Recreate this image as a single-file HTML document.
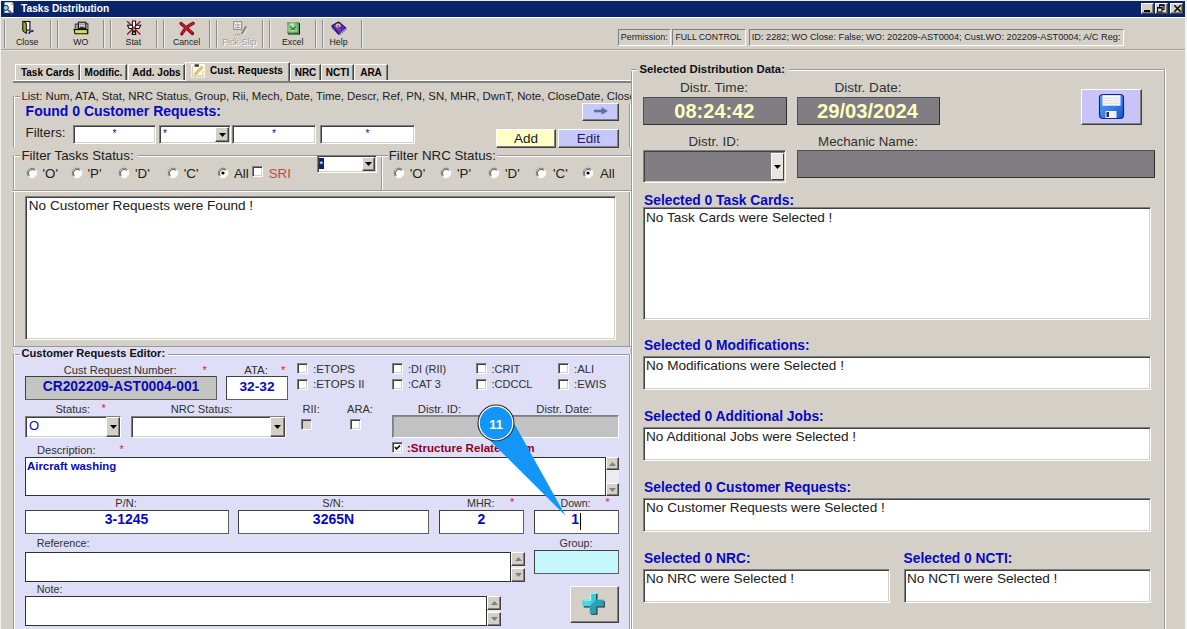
<!DOCTYPE html><html><head><meta charset="utf-8"><style>
html,body{margin:0;padding:0}
body{width:1187px;height:629px;overflow:hidden;position:relative;background:#D4D0C8;font-family:"Liberation Sans",sans-serif}
.a{position:absolute}
.t{position:absolute;white-space:nowrap;font-family:"Liberation Sans",sans-serif}
</style></head><body>
<div class="a" style="left:0px;top:0px;width:1187px;height:1px;background:#F0F0F0"></div>
<div class="a" style="left:0px;top:0px;width:1px;height:629px;background:#F0F0F0"></div>
<div class="a" style="left:1185px;top:0px;width:2px;height:629px;background:#EEF2FA"></div>
<div class="a" style="left:1px;top:1px;width:1184px;height:16px;background:#0A246A"></div>
<svg class="a" style="left:0px;top:0px" width="18" height="17"><path d="M4.5 2.3H12.5L14 3.8V13.2H4.5Z" fill="#F8F8F0"/><path d="M14 3V13.3H4.5" stroke="#101010" stroke-width="1" fill="none"/><rect x="11.5" y="3.5" width="2" height="1.5" fill="#A08080"/><path d="M8.3 10.2L12.2 14.2" stroke="#3050D0" stroke-width="1.8"/><circle cx="5.8" cy="7.9" r="2.6" fill="#80D8E8" stroke="#101010" stroke-width="0.9"/></svg>
<div class="t" style="left:21.00px;top:2px;font-size:10.2px;line-height:14px;font-weight:bold;color:#fff;">Tasks Distribution</div>
<div class="a" style="left:1141px;top:3px;width:13px;height:11px;background:#D4D0C8;border-style:solid;border-width:1px;border-color:#fff #404040 #404040 #fff;box-shadow:inset -1px -1px 0 #808080;box-sizing:border-box"></div>
<div class="a" style="left:1155px;top:3px;width:13px;height:11px;background:#D4D0C8;border-style:solid;border-width:1px;border-color:#fff #404040 #404040 #fff;box-shadow:inset -1px -1px 0 #808080;box-sizing:border-box"></div>
<div class="a" style="left:1170px;top:3px;width:13px;height:11px;background:#D4D0C8;border-style:solid;border-width:1px;border-color:#fff #404040 #404040 #fff;box-shadow:inset -1px -1px 0 #808080;box-sizing:border-box"></div>
<div class="a" style="left:1144px;top:10px;width:6px;height:2px;background:#000"></div>
<svg class="a" style="left:1157px;top:4px" width="8" height="9"><rect x="2.5" y="1" width="4.5" height="4.5" fill="none" stroke="#000"/><rect x="2" y="0.5" width="5.5" height="1.6" fill="#000"/><rect x="0.5" y="3.5" width="4.5" height="4.5" fill="#D4D0C8" stroke="#000"/><rect x="0" y="3" width="5.5" height="1.6" fill="#000"/></svg>
<svg class="a" style="left:1173px;top:4px" width="9" height="9"><path d="M1.3 1.3L7.7 7.7M7.7 1.3L1.3 7.7" stroke="#000" stroke-width="1.5"/></svg>
<div class="a" style="left:1px;top:17px;width:1184px;height:1px;background:#fff"></div>
<div class="a" style="left:1px;top:49px;width:1184px;height:1px;background:#A4A29C"></div>
<div class="a" style="left:1px;top:50px;width:1184px;height:1px;background:#E4E2DC"></div>
<div class="a" style="left:4px;top:20px;width:1px;height:28px;background:#8C8C8C"></div>
<div class="a" style="left:5px;top:20px;width:1px;height:28px;background:#EAEAEA"></div>
<div class="a" style="left:50px;top:20px;width:1px;height:28px;background:#8C8C8C"></div>
<div class="a" style="left:51px;top:20px;width:1px;height:28px;background:#EAEAEA"></div>
<div class="a" style="left:57px;top:20px;width:1px;height:28px;background:#8C8C8C"></div>
<div class="a" style="left:58px;top:20px;width:1px;height:28px;background:#EAEAEA"></div>
<div class="a" style="left:103px;top:20px;width:1px;height:28px;background:#8C8C8C"></div>
<div class="a" style="left:104px;top:20px;width:1px;height:28px;background:#EAEAEA"></div>
<div class="a" style="left:110px;top:20px;width:1px;height:28px;background:#8C8C8C"></div>
<div class="a" style="left:111px;top:20px;width:1px;height:28px;background:#EAEAEA"></div>
<div class="a" style="left:156px;top:20px;width:1px;height:28px;background:#8C8C8C"></div>
<div class="a" style="left:157px;top:20px;width:1px;height:28px;background:#EAEAEA"></div>
<div class="a" style="left:163px;top:20px;width:1px;height:28px;background:#8C8C8C"></div>
<div class="a" style="left:164px;top:20px;width:1px;height:28px;background:#EAEAEA"></div>
<div class="a" style="left:209px;top:20px;width:1px;height:28px;background:#8C8C8C"></div>
<div class="a" style="left:210px;top:20px;width:1px;height:28px;background:#EAEAEA"></div>
<div class="a" style="left:216px;top:20px;width:1px;height:28px;background:#8C8C8C"></div>
<div class="a" style="left:217px;top:20px;width:1px;height:28px;background:#EAEAEA"></div>
<div class="a" style="left:262px;top:20px;width:1px;height:28px;background:#8C8C8C"></div>
<div class="a" style="left:263px;top:20px;width:1px;height:28px;background:#EAEAEA"></div>
<div class="a" style="left:269px;top:20px;width:1px;height:28px;background:#8C8C8C"></div>
<div class="a" style="left:270px;top:20px;width:1px;height:28px;background:#EAEAEA"></div>
<div class="a" style="left:315px;top:20px;width:1px;height:28px;background:#8C8C8C"></div>
<div class="a" style="left:316px;top:20px;width:1px;height:28px;background:#EAEAEA"></div>
<div class="a" style="left:322px;top:20px;width:1px;height:28px;background:#8C8C8C"></div>
<div class="a" style="left:323px;top:20px;width:1px;height:28px;background:#EAEAEA"></div>
<div class="a" style="left:361px;top:20px;width:1px;height:28px;background:#8C8C8C"></div>
<div class="a" style="left:362px;top:20px;width:1px;height:28px;background:#EAEAEA"></div>
<div class="t" style="left:-2.80px;width:60px;text-align:center;top:36px;font-size:8.75px;line-height:12px;font-weight:normal;color:#202020;">Close</div>
<div class="t" style="left:50.70px;width:60px;text-align:center;top:36px;font-size:8.75px;line-height:12px;font-weight:normal;color:#202020;">WO</div>
<div class="t" style="left:103.40px;width:60px;text-align:center;top:36px;font-size:8.75px;line-height:12px;font-weight:normal;color:#202020;">Stat</div>
<div class="t" style="left:156.50px;width:60px;text-align:center;top:36px;font-size:8.75px;line-height:12px;font-weight:normal;color:#202020;">Cancel</div>
<div class="t" style="left:210.20px;width:60px;text-align:center;top:37px;font-size:8.75px;line-height:12px;font-weight:normal;color:#fff;">Pick-Slip</div>
<div class="t" style="left:209.20px;width:60px;text-align:center;top:36px;font-size:8.75px;line-height:12px;font-weight:normal;color:#A0A0A0;">Pick-Slip</div>
<div class="t" style="left:262.70px;width:60px;text-align:center;top:36px;font-size:8.75px;line-height:12px;font-weight:normal;color:#202020;">Excel</div>
<div class="t" style="left:308.50px;width:60px;text-align:center;top:36px;font-size:8.75px;line-height:12px;font-weight:normal;color:#202020;">Help</div>
<svg class="a" style="left:18px;top:18px" width="22" height="20"><rect x="5.3" y="3.5" width="6.6" height="8.6" fill="#F4F4E8" stroke="#101010" stroke-width="1.1"/><path d="M4.8 3.2L8.4 5.2V15.6L4.8 13Z" fill="#90AC18" stroke="#101010" stroke-width="1"/><path d="M11 15.8Q11.5 13 14.8 13" stroke="#202080" stroke-width="1.6" fill="none"/><path d="M13.8 11.4L16.2 13L13.8 14.6Z" fill="#202080"/></svg>
<svg class="a" style="left:70px;top:18px" width="22" height="20"><rect x="5.2" y="6" width="3.5" height="6.5" fill="#A8A8A0" stroke="#202020" stroke-width="0.8"/><rect x="15.7" y="5.8" width="2.2" height="9.5" fill="#E8E8E0" stroke="#101010" stroke-width="0.9"/><rect x="8.4" y="4.2" width="7.4" height="6.4" fill="#F8F8F0" stroke="#101010" stroke-width="1.1"/><rect x="9.3" y="5.2" width="5.6" height="2.2" fill="#A0A098"/><rect x="9.6" y="8.6" width="5" height="1.2" fill="#101010"/><path d="M4.2 11.6H17.2L17.6 15.8H5Z" fill="#D0E040" stroke="#101010" stroke-width="1.1"/><path d="M5.5 13H16.5" stroke="#E8F070" stroke-width="0.8"/></svg>
<svg class="a" style="left:123px;top:18px" width="22" height="20"><path d="M4.2 3.3L17.4 16.5M17.4 3.3L4.2 16.5" stroke="#A01830" stroke-width="1.5"/><path d="M4.5 7.2H17.7L16 10.5H6Z" fill="#F4F4F4" stroke="#101010" stroke-width="1.1"/><rect x="9.4" y="3" width="3.2" height="13.5" fill="#F8F8F8" stroke="#101010" stroke-width="1"/><path d="M9 16.5L11 12.5L13 16.5" stroke="#101010" stroke-width="1.2" fill="none"/><circle cx="11" cy="9.8" r="1.5" fill="#D02040"/></svg>
<svg class="a" style="left:176px;top:18px" width="22" height="20"><path d="M5 5.5Q10 9.5 16.5 15.5" stroke="#600810" stroke-width="3.2" fill="none" stroke-linecap="round"/><path d="M17.2 5.3Q10 8.5 5.8 15.8" stroke="#600810" stroke-width="3.2" fill="none" stroke-linecap="round"/><path d="M5.3 5.6Q10 9.3 16 15" stroke="#E01020" stroke-width="1.8" fill="none" stroke-linecap="round"/><path d="M16.8 5.5Q10 8.6 6.2 15.2" stroke="#E01828" stroke-width="1.8" fill="none" stroke-linecap="round"/></svg>
<svg class="a" style="left:228px;top:18px" width="22" height="20"><rect x="5.7" y="3.7" width="8" height="7.8" fill="#F4F4F4" stroke="#8C8C8C" stroke-width="1.1"/><path d="M7 7H12.5M7 9.5H12.5" stroke="#8C8C8C" stroke-width="0.9"/><path d="M9.8 5V11" stroke="#A8A8A8" stroke-width="0.8"/><path d="M18.5 8.5L14 16" stroke="#888" stroke-width="2.6"/><path d="M19.5 9.5L15 17" stroke="#fff" stroke-width="0.9"/><path d="M7 16.6H13" stroke="#909090" stroke-dasharray="1.2 0.8"/></svg>
<svg class="a" style="left:282px;top:18px" width="22" height="20"><defs><radialGradient id="xg" cx="0.45" cy="0.45" r="0.6"><stop offset="0" stop-color="#C8F0C0"/><stop offset="1" stop-color="#4E9A4E"/></radialGradient></defs><rect x="6" y="5" width="12" height="11.5" fill="#081808"/><rect x="5.2" y="4.1" width="11.8" height="11.5" fill="url(#xg)"/><path d="M8 8.5L14 13M14 8.5L8 13" stroke="#2E7A2E" stroke-width="1.5"/><path d="M6.5 12.8H15.5" stroke="#E0FFE0" stroke-width="0.9"/><path d="M8 6.2H12" stroke="#E8FFE8" stroke-width="0.8"/></svg>
<svg class="a" style="left:328px;top:16px" width="22" height="20"><path d="M4 9.5L10.8 5.8L18 12L10.6 18.2Z" fill="#5A28C0" stroke="#140060" stroke-width="1"/><path d="M10.6 18.2L18 12L18.2 13.6L11 19Z" fill="#F0F0F0" stroke="#302060" stroke-width="0.6"/><path d="M4 9.5L4.3 11.8L10.6 18.2" fill="none" stroke="#140060" stroke-width="1"/><path d="M6 9.5L12.5 15" stroke="#9070E0" stroke-width="0.8"/><ellipse cx="10.2" cy="9.6" rx="2.4" ry="2" fill="#E8D078"/><circle cx="10.2" cy="9.8" r="0.9" fill="#705018"/></svg>
<div class="a" style="left:618px;top:29px;width:53px;height:17px;border:1px solid;border-color:#808080 #fff #fff #808080;box-sizing:border-box"></div>
<div class="t" style="left:620.75px;top:31px;font-size:9px;line-height:12px;font-weight:normal;color:#202020;">Permission:</div>
<div class="a" style="left:672px;top:29px;width:74px;height:17px;border:1px solid;border-color:#808080 #fff #fff #808080;box-sizing:border-box"></div>
<div class="t" style="left:675.50px;top:31px;font-size:8.7px;line-height:12px;font-weight:normal;color:#202020;">FULL CONTROL</div>
<div class="a" style="left:749px;top:29px;width:375px;height:17px;border:1px solid;border-color:#808080 #fff #fff #808080;box-sizing:border-box"></div>
<div class="t" style="left:751.75px;top:31px;font-size:9.2px;line-height:12px;font-weight:normal;color:#202020;width:368px;overflow:hidden">ID: 2282; WO Close: False; WO: 202209-AST0004; Cust.WO: 202209-AST0004; A/C Reg:</div>
<div class="a" style="left:13px;top:80px;width:618px;height:1px;background:#fff"></div>
<div class="a" style="left:13px;top:81px;width:618px;height:2px;background:#808080"></div>
<div class="a" style="left:15px;top:64px;width:65px;height:16px;background:#D4D0C8;border-left:1px solid #fff;border-top:1px solid #fff;border-right:1px solid #404040;box-sizing:border-box;box-shadow:inset -1px 0 0 #808080"></div>
<div class="t" style="left:-2.50px;width:100px;text-align:center;top:66px;font-size:10px;line-height:13px;font-weight:bold;color:#000;">Task Cards</div>
<div class="a" style="left:80px;top:64px;width:47px;height:16px;background:#D4D0C8;border-left:1px solid #fff;border-top:1px solid #fff;border-right:1px solid #404040;box-sizing:border-box;box-shadow:inset -1px 0 0 #808080"></div>
<div class="t" style="left:53.50px;width:100px;text-align:center;top:66px;font-size:10px;line-height:13px;font-weight:bold;color:#000;">Modific.</div>
<div class="a" style="left:128px;top:64px;width:57px;height:16px;background:#D4D0C8;border-left:1px solid #fff;border-top:1px solid #fff;border-right:1px solid #404040;box-sizing:border-box;box-shadow:inset -1px 0 0 #808080"></div>
<div class="t" style="left:106.50px;width:100px;text-align:center;top:66px;font-size:10px;line-height:13px;font-weight:bold;color:#000;">Add. Jobs</div>
<div class="a" style="left:290px;top:64px;width:31px;height:16px;background:#D4D0C8;border-left:1px solid #fff;border-top:1px solid #fff;border-right:1px solid #404040;box-sizing:border-box;box-shadow:inset -1px 0 0 #808080"></div>
<div class="t" style="left:255.50px;width:100px;text-align:center;top:66px;font-size:10px;line-height:13px;font-weight:bold;color:#000;">NRC</div>
<div class="a" style="left:321px;top:64px;width:33px;height:16px;background:#D4D0C8;border-left:1px solid #fff;border-top:1px solid #fff;border-right:1px solid #404040;box-sizing:border-box;box-shadow:inset -1px 0 0 #808080"></div>
<div class="t" style="left:287.50px;width:100px;text-align:center;top:66px;font-size:10px;line-height:13px;font-weight:bold;color:#000;">NCTI</div>
<div class="a" style="left:354px;top:64px;width:34px;height:16px;background:#D4D0C8;border-left:1px solid #fff;border-top:1px solid #fff;border-right:1px solid #404040;box-sizing:border-box;box-shadow:inset -1px 0 0 #808080"></div>
<div class="t" style="left:321.00px;width:100px;text-align:center;top:66px;font-size:10px;line-height:13px;font-weight:bold;color:#000;">ARA</div>
<div class="a" style="left:185px;top:62px;width:105px;height:19px;background:#D4D0C8;border-left:1px solid #fff;border-top:1px solid #fff;border-right:1px solid #404040;box-sizing:border-box;box-shadow:inset -1px 0 0 #808080"></div>
<svg class="a" style="left:191px;top:63px" width="15" height="15"><rect x="0" y="1" width="14" height="13.5" fill="#FCFCE8"/><path d="M1.5 3V13H12V8" stroke="#D8D0B0" stroke-width="1.3" fill="none"/><rect x="3.5" y="1.2" width="4.5" height="2.6" rx="0.6" fill="#383838"/><path d="M3.8 11.5L11.5 3.8" stroke="#D8B060" stroke-width="2.8"/><path d="M4.3 11L11 4.3" stroke="#F0D8A0" stroke-width="0.9"/></svg>
<div class="t" style="left:191.50px;width:110px;text-align:center;top:64px;font-size:10px;line-height:13px;font-weight:bold;color:#000;">Cust. Requests</div>
<div class="a" style="left:13px;top:96px;width:7px;height:1px;background:#999"></div>
<div class="a" style="left:13px;top:97px;width:7px;height:1px;background:#fff"></div>
<div class="a" style="left:13px;top:96px;width:1px;height:51px;background:#999"></div>
<div class="a" style="left:14px;top:96px;width:1px;height:51px;background:#fff"></div>
<div class="t" style="left:21.50px;top:89px;font-size:11.35px;line-height:15px;font-weight:normal;color:#202020;width:609.5px;overflow:hidden">List: Num, ATA, Stat, NRC Status, Group, Rii, Mech, Date, Time, Descr, Ref, PN, SN, MHR, DwnT, Note, CloseDate, CloseTime, CloseMech</div>
<div class="a" style="left:629px;top:104px;width:1px;height:43px;background:#999"></div>
<div class="a" style="left:630px;top:104px;width:1px;height:43px;background:#fff"></div>
<div class="t" style="left:25.60px;top:102px;font-size:14px;line-height:19px;font-weight:bold;color:#0808C4;">Found 0 Customer Requests:</div>
<div class="t" style="left:25.60px;top:124px;font-size:13.3px;line-height:18px;font-weight:normal;color:#202020;">Filters:</div>
<div class="a" style="left:73px;top:125px;width:83px;height:19px;background:#fff;border-style:solid;border-width:1px;border-color:#808080 #fff #fff #808080;box-shadow:inset 1px 1px 0 #404040, inset -1px -1px 0 #D4D0C8;box-sizing:border-box"></div>
<div class="t" style="left:104.50px;width:20px;text-align:center;top:127px;font-size:10px;line-height:13px;font-weight:normal;color:#0808C4;">*</div>
<div class="a" style="left:159px;top:125px;width:72px;height:19px;background:#fff;border-style:solid;border-width:1px;border-color:#808080 #fff #fff #808080;box-shadow:inset 1px 1px 0 #404040, inset -1px -1px 0 #D4D0C8;box-sizing:border-box"></div>
<div class="t" style="left:163.00px;top:127px;font-size:10px;line-height:13px;font-weight:normal;color:#0808C4;">*</div>
<div class="a" style="left:215px;top:127px;width:14px;height:15px;background:#D4D0C8;border-style:solid;border-width:1px;border-color:#fff #404040 #404040 #fff;box-shadow:inset -1px -1px 0 #808080;box-sizing:border-box"></div>
<svg class="a" style="left:218.5px;top:132.5px" width="7" height="4"><path d="M0 0H7L3.5 4Z" fill="#000"/></svg>
<div class="a" style="left:232px;top:125px;width:84px;height:19px;background:#fff;border-style:solid;border-width:1px;border-color:#808080 #fff #fff #808080;box-shadow:inset 1px 1px 0 #404040, inset -1px -1px 0 #D4D0C8;box-sizing:border-box"></div>
<div class="t" style="left:264.00px;width:20px;text-align:center;top:127px;font-size:10px;line-height:13px;font-weight:normal;color:#0808C4;">*</div>
<div class="a" style="left:320px;top:125px;width:95px;height:19px;background:#fff;border-style:solid;border-width:1px;border-color:#808080 #fff #fff #808080;box-shadow:inset 1px 1px 0 #404040, inset -1px -1px 0 #D4D0C8;box-sizing:border-box"></div>
<div class="t" style="left:357.50px;width:20px;text-align:center;top:127px;font-size:10px;line-height:13px;font-weight:normal;color:#0808C4;">*</div>
<div class="a" style="left:582px;top:103px;width:37px;height:18px;background:#C8C8F8;border-style:solid;border-width:1px;border-color:#fff #404040 #404040 #fff;box-shadow:inset -1px -1px 0 #808080;box-sizing:border-box"></div>
<svg class="a" style="left:594px;top:107px" width="14" height="8"><path d="M0 4H9" stroke="#5874A4" stroke-width="2.6"/><path d="M7.5 0.3L14 4L7.5 7.7Z" fill="#5874A4"/></svg>
<div class="a" style="left:496px;top:129px;width:60px;height:19px;background:#FFFFC8;border-style:solid;border-width:1px;border-color:#fff #404040 #404040 #fff;box-shadow:inset -1px -1px 0 #808080;box-sizing:border-box"></div>
<div class="t" style="left:496.00px;width:60px;text-align:center;top:130px;font-size:13.5px;line-height:18px;font-weight:normal;color:#202020;">Add</div>
<div class="a" style="left:558px;top:129px;width:61px;height:19px;background:#C8C8F8;border-style:solid;border-width:1px;border-color:#fff #404040 #404040 #fff;box-shadow:inset -1px -1px 0 #808080;box-sizing:border-box"></div>
<div class="t" style="left:558.50px;width:60px;text-align:center;top:130px;font-size:13.5px;line-height:18px;font-weight:normal;color:#202060;">Edit</div>
<div class="a" style="left:13px;top:155px;width:7px;height:1px;background:#999"></div>
<div class="a" style="left:13px;top:156px;width:7px;height:1px;background:#fff"></div>
<div class="a" style="left:138px;top:155px;width:243px;height:1px;background:#999"></div>
<div class="a" style="left:138px;top:156px;width:243px;height:1px;background:#fff"></div>
<div class="t" style="left:21.50px;top:147px;font-size:13.3px;line-height:18px;font-weight:normal;color:#202020;">Filter Tasks Status:</div>
<div class="a" style="left:13px;top:155px;width:1px;height:35px;background:#999"></div>
<div class="a" style="left:14px;top:155px;width:1px;height:35px;background:#fff"></div>
<div class="a" style="left:13px;top:190px;width:368px;height:1px;background:#999"></div>
<div class="a" style="left:13px;top:191px;width:368px;height:1px;background:#fff"></div>
<div class="a" style="left:381px;top:155px;width:1px;height:36px;background:#999"></div>
<div class="a" style="left:382px;top:155px;width:1px;height:36px;background:#fff"></div>
<svg class="a" style="left:25.5px;top:167px" width="12" height="12"><circle cx="6" cy="6" r="4.3" fill="#fff"/><path d="M2.6 9.4A4.8 4.8 0 0 1 9.4 2.6" stroke="#808080" fill="none" stroke-width="1"/><path d="M3.2 8.8A4 4 0 0 1 8.8 3.2" stroke="#404040" fill="none" stroke-width="0.9"/><path d="M9.4 2.6A4.8 4.8 0 0 1 2.6 9.4" stroke="#fff" fill="none" stroke-width="1"/></svg>
<div class="t" style="left:42.50px;top:165px;font-size:13.3px;line-height:18px;font-weight:normal;color:#202020;">'O'</div>
<svg class="a" style="left:71px;top:167px" width="12" height="12"><circle cx="6" cy="6" r="4.3" fill="#fff"/><path d="M2.6 9.4A4.8 4.8 0 0 1 9.4 2.6" stroke="#808080" fill="none" stroke-width="1"/><path d="M3.2 8.8A4 4 0 0 1 8.8 3.2" stroke="#404040" fill="none" stroke-width="0.9"/><path d="M9.4 2.6A4.8 4.8 0 0 1 2.6 9.4" stroke="#fff" fill="none" stroke-width="1"/></svg>
<div class="t" style="left:87.50px;top:165px;font-size:13.3px;line-height:18px;font-weight:normal;color:#202020;">'P'</div>
<svg class="a" style="left:118px;top:167px" width="12" height="12"><circle cx="6" cy="6" r="4.3" fill="#fff"/><path d="M2.6 9.4A4.8 4.8 0 0 1 9.4 2.6" stroke="#808080" fill="none" stroke-width="1"/><path d="M3.2 8.8A4 4 0 0 1 8.8 3.2" stroke="#404040" fill="none" stroke-width="0.9"/><path d="M9.4 2.6A4.8 4.8 0 0 1 2.6 9.4" stroke="#fff" fill="none" stroke-width="1"/></svg>
<div class="t" style="left:135.00px;top:165px;font-size:13.3px;line-height:18px;font-weight:normal;color:#202020;">'D'</div>
<svg class="a" style="left:167px;top:167px" width="12" height="12"><circle cx="6" cy="6" r="4.3" fill="#fff"/><path d="M2.6 9.4A4.8 4.8 0 0 1 9.4 2.6" stroke="#808080" fill="none" stroke-width="1"/><path d="M3.2 8.8A4 4 0 0 1 8.8 3.2" stroke="#404040" fill="none" stroke-width="0.9"/><path d="M9.4 2.6A4.8 4.8 0 0 1 2.6 9.4" stroke="#fff" fill="none" stroke-width="1"/></svg>
<div class="t" style="left:183.75px;top:165px;font-size:13.3px;line-height:18px;font-weight:normal;color:#202020;">'C'</div>
<svg class="a" style="left:216.5px;top:167px" width="12" height="12"><circle cx="6" cy="6" r="4.3" fill="#fff"/><path d="M2.6 9.4A4.8 4.8 0 0 1 9.4 2.6" stroke="#808080" fill="none" stroke-width="1"/><path d="M3.2 8.8A4 4 0 0 1 8.8 3.2" stroke="#404040" fill="none" stroke-width="0.9"/><path d="M9.4 2.6A4.8 4.8 0 0 1 2.6 9.4" stroke="#fff" fill="none" stroke-width="1"/><circle cx="6" cy="6" r="1.6" fill="#000"/></svg>
<div class="t" style="left:234.00px;top:165px;font-size:13.3px;line-height:18px;font-weight:normal;color:#202020;">All</div>
<div class="a" style="left:252px;top:166px;width:11px;height:11px;background:#fff;border-style:solid;border-width:1px;border-color:#808080 #fff #fff #808080;box-shadow:inset 1px 1px 0 #404040, inset -1px -1px 0 #D4D0C8;box-sizing:border-box"></div>
<div class="t" style="left:268.75px;top:165px;font-size:13.3px;line-height:18px;font-weight:normal;color:#C04848;">SRI</div>
<div class="a" style="left:317px;top:155px;width:60px;height:18px;background:#fff;border-style:solid;border-width:1px;border-color:#808080 #fff #fff #808080;box-shadow:inset 1px 1px 0 #404040, inset -1px -1px 0 #D4D0C8;box-sizing:border-box"></div>
<div class="a" style="left:319px;top:158px;width:5px;height:11px;background:#0A246A"></div>
<div class="t" style="left:319.50px;top:158px;font-size:9px;line-height:12px;font-weight:normal;color:#fff;">*</div>
<div class="a" style="left:362px;top:157px;width:13px;height:14px;background:#D4D0C8;border-style:solid;border-width:1px;border-color:#fff #404040 #404040 #fff;box-shadow:inset -1px -1px 0 #808080;box-sizing:border-box"></div>
<svg class="a" style="left:365.0px;top:162.0px" width="7" height="4"><path d="M0 0H7L3.5 4Z" fill="#000"/></svg>
<div class="a" style="left:376px;top:155px;width:12px;height:1px;background:#999"></div>
<div class="a" style="left:376px;top:156px;width:12px;height:1px;background:#fff"></div>
<div class="a" style="left:497px;top:155px;width:134px;height:1px;background:#999"></div>
<div class="a" style="left:497px;top:156px;width:134px;height:1px;background:#fff"></div>
<div class="t" style="left:388.75px;top:147px;font-size:13.3px;line-height:18px;font-weight:normal;color:#202020;">Filter NRC Status:</div>
<div class="a" style="left:381px;top:190px;width:250px;height:1px;background:#999"></div>
<div class="a" style="left:381px;top:191px;width:250px;height:1px;background:#fff"></div>
<svg class="a" style="left:393px;top:167px" width="12" height="12"><circle cx="6" cy="6" r="4.3" fill="#fff"/><path d="M2.6 9.4A4.8 4.8 0 0 1 9.4 2.6" stroke="#808080" fill="none" stroke-width="1"/><path d="M3.2 8.8A4 4 0 0 1 8.8 3.2" stroke="#404040" fill="none" stroke-width="0.9"/><path d="M9.4 2.6A4.8 4.8 0 0 1 2.6 9.4" stroke="#fff" fill="none" stroke-width="1"/></svg>
<div class="t" style="left:409.75px;top:165px;font-size:13.3px;line-height:18px;font-weight:normal;color:#202020;">'O'</div>
<svg class="a" style="left:440px;top:167px" width="12" height="12"><circle cx="6" cy="6" r="4.3" fill="#fff"/><path d="M2.6 9.4A4.8 4.8 0 0 1 9.4 2.6" stroke="#808080" fill="none" stroke-width="1"/><path d="M3.2 8.8A4 4 0 0 1 8.8 3.2" stroke="#404040" fill="none" stroke-width="0.9"/><path d="M9.4 2.6A4.8 4.8 0 0 1 2.6 9.4" stroke="#fff" fill="none" stroke-width="1"/></svg>
<div class="t" style="left:457.00px;top:165px;font-size:13.3px;line-height:18px;font-weight:normal;color:#202020;">'P'</div>
<svg class="a" style="left:488px;top:167px" width="12" height="12"><circle cx="6" cy="6" r="4.3" fill="#fff"/><path d="M2.6 9.4A4.8 4.8 0 0 1 9.4 2.6" stroke="#808080" fill="none" stroke-width="1"/><path d="M3.2 8.8A4 4 0 0 1 8.8 3.2" stroke="#404040" fill="none" stroke-width="0.9"/><path d="M9.4 2.6A4.8 4.8 0 0 1 2.6 9.4" stroke="#fff" fill="none" stroke-width="1"/></svg>
<div class="t" style="left:505.00px;top:165px;font-size:13.3px;line-height:18px;font-weight:normal;color:#202020;">'D'</div>
<svg class="a" style="left:535px;top:167px" width="12" height="12"><circle cx="6" cy="6" r="4.3" fill="#fff"/><path d="M2.6 9.4A4.8 4.8 0 0 1 9.4 2.6" stroke="#808080" fill="none" stroke-width="1"/><path d="M3.2 8.8A4 4 0 0 1 8.8 3.2" stroke="#404040" fill="none" stroke-width="0.9"/><path d="M9.4 2.6A4.8 4.8 0 0 1 2.6 9.4" stroke="#fff" fill="none" stroke-width="1"/></svg>
<div class="t" style="left:553.00px;top:165px;font-size:13.3px;line-height:18px;font-weight:normal;color:#202020;">'C'</div>
<svg class="a" style="left:582px;top:167px" width="12" height="12"><circle cx="6" cy="6" r="4.3" fill="#fff"/><path d="M2.6 9.4A4.8 4.8 0 0 1 9.4 2.6" stroke="#808080" fill="none" stroke-width="1"/><path d="M3.2 8.8A4 4 0 0 1 8.8 3.2" stroke="#404040" fill="none" stroke-width="0.9"/><path d="M9.4 2.6A4.8 4.8 0 0 1 2.6 9.4" stroke="#fff" fill="none" stroke-width="1"/><circle cx="6" cy="6" r="1.6" fill="#000"/></svg>
<div class="t" style="left:600.00px;top:165px;font-size:13.3px;line-height:18px;font-weight:normal;color:#202020;">All</div>
<div class="a" style="left:13px;top:192px;width:1px;height:154px;background:#999"></div>
<div class="a" style="left:14px;top:192px;width:1px;height:154px;background:#fff"></div>
<div class="a" style="left:13px;top:346px;width:618px;height:1px;background:#999"></div>
<div class="a" style="left:13px;top:347px;width:618px;height:1px;background:#fff"></div>
<div class="a" style="left:629px;top:192px;width:1px;height:154px;background:#999"></div>
<div class="a" style="left:630px;top:192px;width:1px;height:154px;background:#fff"></div>
<div class="a" style="left:25px;top:196px;width:591px;height:144px;background:#fff;border-style:solid;border-width:1px;border-color:#808080 #fff #fff #808080;box-shadow:inset 1px 1px 0 #404040, inset -1px -1px 0 #D4D0C8;box-sizing:border-box"></div>
<div class="t" style="left:28.75px;top:197px;font-size:13.6px;line-height:18px;font-weight:normal;color:#202020;">No Customer Requests were Found !</div>
<div class="a" style="left:14px;top:347px;width:616px;height:282px;background:#DEDEF6"></div>
<div class="a" style="left:14px;top:354px;width:6px;height:1px;background:#999"></div>
<div class="a" style="left:14px;top:355px;width:6px;height:1px;background:#fff"></div>
<div class="a" style="left:168px;top:354px;width:461px;height:1px;background:#999"></div>
<div class="a" style="left:168px;top:355px;width:461px;height:1px;background:#fff"></div>
<div class="a" style="left:13px;top:354px;width:1px;height:275px;background:#999"></div>
<div class="a" style="left:14px;top:354px;width:1px;height:275px;background:#fff"></div>
<div class="a" style="left:629px;top:354px;width:1px;height:275px;background:#999"></div>
<div class="a" style="left:630px;top:354px;width:1px;height:275px;background:#fff"></div>
<div class="t" style="left:21.50px;top:346px;font-size:11.1px;line-height:15px;font-weight:bold;color:#101010;">Customer Requests Editor:</div>
<div class="t" style="left:20.20px;width:200px;text-align:center;top:363px;font-size:11.1px;line-height:15px;font-weight:normal;color:#303030;">Cust Request Number:</div>
<div class="t" style="left:202.50px;top:363px;font-size:11px;line-height:15px;font-weight:normal;color:#E02030;">*</div>
<div class="a" style="left:25px;top:376px;width:192px;height:24px;background:#C4C4C0;border-style:solid;border-width:1px;border-color:#404040 #606060 #606060 #404040;box-sizing:border-box"></div>
<div class="t" style="left:21.00px;width:200px;text-align:center;top:378px;font-size:13.8px;line-height:18px;font-weight:bold;color:#0808C4;">CR202209-AST0004-001</div>
<div class="t" style="left:226.00px;width:60px;text-align:center;top:363px;font-size:11.4px;line-height:15px;font-weight:normal;color:#303030;">ATA:</div>
<div class="t" style="left:281.00px;top:363px;font-size:11px;line-height:15px;font-weight:normal;color:#E02030;">*</div>
<div class="a" style="left:226px;top:376px;width:62px;height:24px;background:#fff;border-style:solid;border-width:1px;border-color:#404040 #606060 #606060 #404040;box-sizing:border-box"></div>
<div class="t" style="left:227.00px;width:60px;text-align:center;top:378px;font-size:13.7px;line-height:18px;font-weight:bold;color:#0808C4;">32-32</div>
<div class="a" style="left:297px;top:363px;width:11px;height:11px;background:#fff;border-style:solid;border-width:1px;border-color:#808080 #fff #fff #808080;box-shadow:inset 1px 1px 0 #404040, inset -1px -1px 0 #D4D0C8;box-sizing:border-box"></div>
<div class="t" style="left:313.00px;top:362px;font-size:11.5px;line-height:15px;font-weight:normal;color:#303030;">:ETOPS</div>
<div class="a" style="left:297px;top:379px;width:11px;height:11px;background:#fff;border-style:solid;border-width:1px;border-color:#808080 #fff #fff #808080;box-shadow:inset 1px 1px 0 #404040, inset -1px -1px 0 #D4D0C8;box-sizing:border-box"></div>
<div class="t" style="left:313.00px;top:377px;font-size:11.5px;line-height:15px;font-weight:normal;color:#303030;">:ETOPS II</div>
<div class="a" style="left:392px;top:363px;width:11px;height:11px;background:#fff;border-style:solid;border-width:1px;border-color:#808080 #fff #fff #808080;box-shadow:inset 1px 1px 0 #404040, inset -1px -1px 0 #D4D0C8;box-sizing:border-box"></div>
<div class="t" style="left:408.00px;top:362px;font-size:10.9px;line-height:15px;font-weight:normal;color:#303030;">:DI (RII)</div>
<div class="a" style="left:392px;top:379px;width:11px;height:11px;background:#fff;border-style:solid;border-width:1px;border-color:#808080 #fff #fff #808080;box-shadow:inset 1px 1px 0 #404040, inset -1px -1px 0 #D4D0C8;box-sizing:border-box"></div>
<div class="t" style="left:408.00px;top:377px;font-size:10.9px;line-height:15px;font-weight:normal;color:#303030;">:CAT 3</div>
<div class="a" style="left:476px;top:363px;width:11px;height:11px;background:#fff;border-style:solid;border-width:1px;border-color:#808080 #fff #fff #808080;box-shadow:inset 1px 1px 0 #404040, inset -1px -1px 0 #D4D0C8;box-sizing:border-box"></div>
<div class="t" style="left:491.50px;top:362px;font-size:11.0px;line-height:15px;font-weight:normal;color:#303030;">:CRIT</div>
<div class="a" style="left:476px;top:379px;width:11px;height:11px;background:#fff;border-style:solid;border-width:1px;border-color:#808080 #fff #fff #808080;box-shadow:inset 1px 1px 0 #404040, inset -1px -1px 0 #D4D0C8;box-sizing:border-box"></div>
<div class="t" style="left:491.50px;top:377px;font-size:11.0px;line-height:15px;font-weight:normal;color:#303030;">:CDCCL</div>
<div class="a" style="left:558px;top:363px;width:11px;height:11px;background:#fff;border-style:solid;border-width:1px;border-color:#808080 #fff #fff #808080;box-shadow:inset 1px 1px 0 #404040, inset -1px -1px 0 #D4D0C8;box-sizing:border-box"></div>
<div class="t" style="left:574.00px;top:362px;font-size:11.4px;line-height:15px;font-weight:normal;color:#303030;">:ALI</div>
<div class="a" style="left:558px;top:379px;width:11px;height:11px;background:#fff;border-style:solid;border-width:1px;border-color:#808080 #fff #fff #808080;box-shadow:inset 1px 1px 0 #404040, inset -1px -1px 0 #D4D0C8;box-sizing:border-box"></div>
<div class="t" style="left:574.00px;top:377px;font-size:11.4px;line-height:15px;font-weight:normal;color:#303030;">:EWIS</div>
<div class="t" style="left:42.80px;width:60px;text-align:center;top:402px;font-size:11.2px;line-height:15px;font-weight:normal;color:#303030;">Status:</div>
<div class="t" style="left:101.50px;top:401px;font-size:11px;line-height:15px;font-weight:normal;color:#E02030;">*</div>
<div class="t" style="left:151.50px;width:100px;text-align:center;top:402px;font-size:11.1px;line-height:15px;font-weight:normal;color:#303030;">NRC Status:</div>
<div class="a" style="left:25px;top:416px;width:96px;height:22px;background:#fff;border-style:solid;border-width:1px;border-color:#808080 #fff #fff #808080;box-shadow:inset 1px 1px 0 #404040, inset -1px -1px 0 #D4D0C8;box-sizing:border-box"></div>
<div class="t" style="left:29.00px;top:417px;font-size:13px;line-height:17px;font-weight:normal;color:#0808C4;">O</div>
<div class="a" style="left:106px;top:417px;width:14px;height:20px;background:#D4D0C8;border-style:solid;border-width:1px;border-color:#fff #404040 #404040 #fff;box-shadow:inset -1px -1px 0 #808080;box-sizing:border-box"></div>
<svg class="a" style="left:109.5px;top:425.0px" width="7" height="4"><path d="M0 0H7L3.5 4Z" fill="#000"/></svg>
<div class="a" style="left:131px;top:416px;width:155px;height:22px;background:#fff;border-style:solid;border-width:1px;border-color:#808080 #fff #fff #808080;box-shadow:inset 1px 1px 0 #404040, inset -1px -1px 0 #D4D0C8;box-sizing:border-box"></div>
<div class="a" style="left:270px;top:417px;width:15px;height:20px;background:#D4D0C8;border-style:solid;border-width:1px;border-color:#fff #404040 #404040 #fff;box-shadow:inset -1px -1px 0 #808080;box-sizing:border-box"></div>
<svg class="a" style="left:274.0px;top:425.0px" width="7" height="4"><path d="M0 0H7L3.5 4Z" fill="#000"/></svg>
<div class="t" style="left:302.50px;top:402px;font-size:11.1px;line-height:15px;font-weight:normal;color:#303030;">RII:</div>
<div class="t" style="left:347.00px;top:402px;font-size:11.1px;line-height:15px;font-weight:normal;color:#303030;">ARA:</div>
<div class="a" style="left:301px;top:419px;width:11px;height:11px;background:#D4D0C8;border-style:solid;border-width:1px;border-color:#808080 #fff #fff #808080;box-shadow:inset 1px 1px 0 #404040, inset -1px -1px 0 #D4D0C8;box-sizing:border-box"></div>
<div class="a" style="left:350px;top:419px;width:11px;height:11px;background:#fff;border-style:solid;border-width:1px;border-color:#808080 #fff #fff #808080;box-shadow:inset 1px 1px 0 #404040, inset -1px -1px 0 #D4D0C8;box-sizing:border-box"></div>
<div class="t" style="left:399.50px;width:80px;text-align:center;top:402px;font-size:11.3px;line-height:15px;font-weight:normal;color:#303030;">Distr. ID:</div>
<div class="t" style="left:536.25px;top:402px;font-size:11.3px;line-height:15px;font-weight:normal;color:#303030;">Distr. Date:</div>
<div class="a" style="left:392px;top:415px;width:227px;height:23px;background:#C2C2C2;border:1px solid;border-color:#808080 #fff #fff #808080;box-shadow:inset 1px 1px 0 #8C8C8C;box-sizing:border-box"></div>
<div class="a" style="left:392px;top:442px;width:11px;height:11px;background:#fff;border-style:solid;border-width:1px;border-color:#808080 #fff #fff #808080;box-shadow:inset 1px 1px 0 #404040, inset -1px -1px 0 #D4D0C8;box-sizing:border-box"></div>
<svg class="a" style="left:392px;top:442px" width="11" height="11"><path d="M3 5L4.5 7L8 3.5" stroke="#000" stroke-width="1.6" fill="none"/></svg>
<div class="t" style="left:407.00px;top:440px;font-size:11.6px;line-height:16px;font-weight:bold;color:#900020;">:Structure Related Item</div>
<div class="t" style="left:37.00px;top:443px;font-size:11.1px;line-height:15px;font-weight:normal;color:#303030;">Description:</div>
<div class="t" style="left:119.50px;top:442px;font-size:11px;line-height:15px;font-weight:normal;color:#E02030;">*</div>
<div class="a" style="left:25px;top:457px;width:581px;height:39px;background:#fff;border-style:solid;border-width:1px;border-color:#303030 #303030 #303030 #303030;box-sizing:border-box"></div>
<div class="t" style="left:27.00px;top:459px;font-size:11.4px;line-height:15px;font-weight:bold;color:#0808C4;">Aircraft washing</div>
<div class="a" style="left:606px;top:470px;width:13px;height:13px;background:#ECEAF2"></div>
<div class="a" style="left:606px;top:457px;width:13px;height:13px;background:#D4D0C8;border-style:solid;border-width:1px;border-color:#fff #404040 #404040 #fff;box-shadow:inset -1px -1px 0 #808080;box-sizing:border-box"></div>
<div class="a" style="left:606px;top:483px;width:13px;height:13px;background:#D4D0C8;border-style:solid;border-width:1px;border-color:#fff #404040 #404040 #fff;box-shadow:inset -1px -1px 0 #808080;box-sizing:border-box"></div>
<svg class="a" style="left:609.0px;top:461.5px" width="7" height="4"><path d="M0 4H7L3.5 0Z" fill="#808080"/></svg>
<svg class="a" style="left:609.0px;top:487.5px" width="7" height="4"><path d="M0 0H7L3.5 4Z" fill="#808080"/></svg>
<div class="t" style="left:96.00px;width:60px;text-align:center;top:496px;font-size:11px;line-height:15px;font-weight:normal;color:#303030;">P/N:</div>
<div class="t" style="left:303.00px;width:60px;text-align:center;top:496px;font-size:11px;line-height:15px;font-weight:normal;color:#303030;">S/N:</div>
<div class="t" style="left:467.00px;top:496px;font-size:10.8px;line-height:15px;font-weight:normal;color:#303030;">MHR:</div>
<div class="t" style="left:510.00px;top:495px;font-size:11px;line-height:15px;font-weight:normal;color:#E02030;">*</div>
<div class="t" style="left:560.50px;top:496px;font-size:10.6px;line-height:14px;font-weight:normal;color:#303030;">Down:</div>
<div class="t" style="left:605.50px;top:495px;font-size:11px;line-height:15px;font-weight:normal;color:#E02030;">*</div>
<div class="a" style="left:25px;top:510px;width:204px;height:24px;background:#fff;border-style:solid;border-width:1px;border-color:#404040 #606060 #606060 #404040;box-sizing:border-box"></div>
<div class="t" style="left:76.50px;width:100px;text-align:center;top:510px;font-size:14px;line-height:19px;font-weight:bold;color:#0808C4;">3-1245</div>
<div class="a" style="left:238px;top:510px;width:191px;height:24px;background:#fff;border-style:solid;border-width:1px;border-color:#404040 #606060 #606060 #404040;box-sizing:border-box"></div>
<div class="t" style="left:283.50px;width:100px;text-align:center;top:510px;font-size:14px;line-height:19px;font-weight:bold;color:#0808C4;">3265N</div>
<div class="a" style="left:439px;top:510px;width:85px;height:24px;background:#fff;border-style:solid;border-width:1px;border-color:#404040 #606060 #606060 #404040;box-sizing:border-box"></div>
<div class="t" style="left:461.50px;width:40px;text-align:center;top:510px;font-size:14px;line-height:19px;font-weight:bold;color:#0808C4;">2</div>
<div class="a" style="left:534px;top:510px;width:85px;height:24px;background:#fff;border-style:solid;border-width:1px;border-color:#404040 #606060 #606060 #404040;box-sizing:border-box"></div>
<div class="t" style="left:539.00px;width:40px;text-align:right;top:510px;font-size:14px;line-height:19px;font-weight:bold;color:#0808C4;">1</div>
<div class="a" style="left:580px;top:513px;width:1px;height:17px;background:#000"></div>
<div class="t" style="left:36.75px;top:536px;font-size:10.8px;line-height:15px;font-weight:normal;color:#303030;">Reference:</div>
<div class="t" style="left:546.00px;width:60px;text-align:center;top:536px;font-size:10.8px;line-height:15px;font-weight:normal;color:#303030;">Group:</div>
<div class="a" style="left:25px;top:552px;width:486px;height:30px;background:#fff;border-style:solid;border-width:1px;border-color:#303030 #303030 #303030 #303030;box-sizing:border-box"></div>
<div class="a" style="left:511px;top:566px;width:14px;height:2px;background:#ECEAF2"></div>
<div class="a" style="left:511px;top:552px;width:14px;height:14px;background:#D4D0C8;border-style:solid;border-width:1px;border-color:#fff #404040 #404040 #fff;box-shadow:inset -1px -1px 0 #808080;box-sizing:border-box"></div>
<div class="a" style="left:511px;top:568px;width:14px;height:14px;background:#D4D0C8;border-style:solid;border-width:1px;border-color:#fff #404040 #404040 #fff;box-shadow:inset -1px -1px 0 #808080;box-sizing:border-box"></div>
<svg class="a" style="left:514.5px;top:557.0px" width="7" height="4"><path d="M0 4H7L3.5 0Z" fill="#808080"/></svg>
<svg class="a" style="left:514.5px;top:573.0px" width="7" height="4"><path d="M0 0H7L3.5 4Z" fill="#808080"/></svg>
<div class="a" style="left:534px;top:550px;width:85px;height:24px;background:#C4F8FC;border-style:solid;border-width:1px;border-color:#404040 #606060 #606060 #404040;box-sizing:border-box"></div>
<div class="t" style="left:36.75px;top:582px;font-size:10.8px;line-height:15px;font-weight:normal;color:#303030;">Note:</div>
<div class="a" style="left:25px;top:596px;width:462px;height:30px;background:#fff;border-style:solid;border-width:1px;border-color:#303030 #303030 #303030 #303030;box-sizing:border-box"></div>
<div class="a" style="left:487px;top:610px;width:14px;height:2px;background:#ECEAF2"></div>
<div class="a" style="left:487px;top:596px;width:14px;height:14px;background:#D4D0C8;border-style:solid;border-width:1px;border-color:#fff #404040 #404040 #fff;box-shadow:inset -1px -1px 0 #808080;box-sizing:border-box"></div>
<div class="a" style="left:487px;top:612px;width:14px;height:14px;background:#D4D0C8;border-style:solid;border-width:1px;border-color:#fff #404040 #404040 #fff;box-shadow:inset -1px -1px 0 #808080;box-sizing:border-box"></div>
<svg class="a" style="left:490.5px;top:601.0px" width="7" height="4"><path d="M0 4H7L3.5 0Z" fill="#808080"/></svg>
<svg class="a" style="left:490.5px;top:617.0px" width="7" height="4"><path d="M0 0H7L3.5 4Z" fill="#808080"/></svg>
<div class="a" style="left:570px;top:586px;width:49px;height:37px;background:#D4D0C8;border-style:solid;border-width:1px;border-color:#fff #404040 #404040 #fff;box-shadow:inset -1px -1px 0 #808080;box-sizing:border-box"></div>
<svg class="a" style="left:581px;top:591px" width="27" height="27"><path d="M8.8 1.5H15.2V8.8H22.5V15.2H15.2V22.5H8.8V15.2H1.5V8.8H8.8Z" fill="#203030" transform="translate(1.3,1.3)"/><path d="M8.8 1.5H15.2V8.8H22.5V15.2H15.2V22.5H8.8V15.2H1.5V8.8H8.8Z" fill="#3CCAD8"/><path d="M15.2 8.8H22.5V15.2H15.2V22.5H8.8V15.2L12 12Z" fill="#2AA0B0"/><path d="M8.8 1.5H15.2V2.8H10.1V10.1H2.8V8.8H8.8Z" fill="#B8FAFF"/><path d="M1.5 8.8H8.8V15.2H1.5Z" fill="#58DCE8" opacity="0.6"/></svg>
<div class="a" style="left:631px;top:69px;width:1px;height:560px;background:#999"></div>
<div class="a" style="left:632px;top:69px;width:1px;height:560px;background:#fff"></div>
<div class="a" style="left:631px;top:69px;width:6px;height:1px;background:#999"></div>
<div class="a" style="left:631px;top:70px;width:6px;height:1px;background:#fff"></div>
<div class="a" style="left:789px;top:69px;width:376px;height:1px;background:#999"></div>
<div class="a" style="left:789px;top:70px;width:376px;height:1px;background:#fff"></div>
<div class="a" style="left:1164px;top:69px;width:1px;height:560px;background:#999"></div>
<div class="a" style="left:1165px;top:69px;width:1px;height:560px;background:#fff"></div>
<div class="t" style="left:639.40px;top:62px;font-size:11.4px;line-height:15px;font-weight:bold;color:#101010;">Selected Distribution Data:</div>
<div class="t" style="left:654.00px;width:120px;text-align:center;top:79px;font-size:13.6px;line-height:18px;font-weight:normal;color:#303030;">Distr. Time:</div>
<div class="t" style="left:808.00px;width:120px;text-align:center;top:79px;font-size:13.6px;line-height:18px;font-weight:normal;color:#303030;">Distr. Date:</div>
<div class="a" style="left:643px;top:97px;width:144px;height:28px;background:#807E82;border-style:solid;border-width:1px;border-color:#505050 #303030 #303030 #505050;box-sizing:border-box"></div>
<div class="t" style="left:644.40px;width:140px;text-align:center;top:98px;font-size:20px;line-height:26px;font-weight:bold;color:#FFFFC0;">08:24:42</div>
<div class="a" style="left:797px;top:97px;width:143px;height:28px;background:#807E82;border-style:solid;border-width:1px;border-color:#505050 #303030 #303030 #505050;box-sizing:border-box"></div>
<div class="t" style="left:797.50px;width:140px;text-align:center;top:98px;font-size:20.2px;line-height:27px;font-weight:bold;color:#FFFFC0;">29/03/2024</div>
<div class="a" style="left:1081px;top:89px;width:61px;height:36px;background:#C8C4F8;border-style:solid;border-width:1px;border-color:#fff #404040 #404040 #fff;box-shadow:inset -1px -1px 0 #808080;box-sizing:border-box"></div>
<svg class="a" style="left:1098px;top:93px" width="27" height="27"><defs><linearGradient id="fg" x1="0" y1="0" x2="1" y2="1"><stop offset="0" stop-color="#5AA8FF"/><stop offset="0.6" stop-color="#3478E8"/><stop offset="1" stop-color="#1E50C8"/></linearGradient></defs><rect x="1.5" y="1.5" width="24" height="24" rx="3.5" fill="url(#fg)" stroke="#0A2890" stroke-width="1.2"/><rect x="4.5" y="2.2" width="18" height="10.5" fill="#F4F8FF"/><path d="M5.5 5.3H21.5M5.5 7.8H21.5M5.5 10.3H21.5" stroke="#E0D0C0" stroke-width="0.7"/><rect x="7.5" y="18" width="11" height="7" fill="#F0F0F0"/><rect x="8.5" y="19" width="2.5" height="5" fill="#303030"/></svg>
<div class="t" style="left:654.00px;width:120px;text-align:center;top:133px;font-size:13.3px;line-height:18px;font-weight:normal;color:#303030;">Distr. ID:</div>
<div class="t" style="left:798.00px;width:140px;text-align:center;top:133px;font-size:13.3px;line-height:18px;font-weight:normal;color:#303030;">Mechanic Name:</div>
<div class="a" style="left:643px;top:150px;width:143px;height:33px;background:#807E82;border-style:solid;border-width:1px;border-color:#808080 #fff #fff #808080;box-shadow:inset 1px 1px 0 #404040, inset -1px -1px 0 #D4D0C8;box-sizing:border-box"></div>
<div class="a" style="left:771px;top:153px;width:13px;height:27px;background:#E8E6E0;border-style:solid;border-width:1px;border-color:#fff #404040 #404040 #fff;box-sizing:border-box"></div>
<svg class="a" style="left:774px;top:165px" width="7" height="4"><path d="M0 0H7L3.5 4Z" fill="#000"/></svg>
<div class="a" style="left:797px;top:150px;width:358px;height:28px;background:#807E82;border-style:solid;border-width:1px;border-color:#505050 #303030 #303030 #505050;box-sizing:border-box"></div>
<div class="t" style="left:644.00px;top:192px;font-size:13.8px;line-height:18px;font-weight:bold;color:#0808C4;">Selected 0 Task Cards:</div>
<div class="a" style="left:643px;top:207px;width:508px;height:113px;background:#fff;border-style:solid;border-width:1px;border-color:#808080 #fff #fff #808080;box-shadow:inset 1px 1px 0 #404040, inset -1px -1px 0 #D4D0C8;box-sizing:border-box"></div>
<div class="t" style="left:646.00px;top:209px;font-size:13.6px;line-height:18px;font-weight:normal;color:#202020;">No Task Cards were Selected !</div>
<div class="t" style="left:644.00px;top:337px;font-size:13.8px;line-height:18px;font-weight:bold;color:#0808C4;">Selected 0 Modifications:</div>
<div class="a" style="left:643px;top:356px;width:508px;height:34px;background:#fff;border-style:solid;border-width:1px;border-color:#808080 #fff #fff #808080;box-shadow:inset 1px 1px 0 #404040, inset -1px -1px 0 #D4D0C8;box-sizing:border-box"></div>
<div class="t" style="left:646.00px;top:357px;font-size:13.6px;line-height:18px;font-weight:normal;color:#202020;">No Modifications were Selected !</div>
<div class="t" style="left:644.00px;top:408px;font-size:13.8px;line-height:18px;font-weight:bold;color:#0808C4;">Selected 0 Additional Jobs:</div>
<div class="a" style="left:643px;top:427px;width:508px;height:34px;background:#fff;border-style:solid;border-width:1px;border-color:#808080 #fff #fff #808080;box-shadow:inset 1px 1px 0 #404040, inset -1px -1px 0 #D4D0C8;box-sizing:border-box"></div>
<div class="t" style="left:646.00px;top:428px;font-size:13.6px;line-height:18px;font-weight:normal;color:#202020;">No Additional Jobs were Selected !</div>
<div class="t" style="left:644.00px;top:479px;font-size:13.8px;line-height:18px;font-weight:bold;color:#0808C4;">Selected 0 Customer Requests:</div>
<div class="a" style="left:643px;top:498px;width:508px;height:34px;background:#fff;border-style:solid;border-width:1px;border-color:#808080 #fff #fff #808080;box-shadow:inset 1px 1px 0 #404040, inset -1px -1px 0 #D4D0C8;box-sizing:border-box"></div>
<div class="t" style="left:646.00px;top:499px;font-size:13.6px;line-height:18px;font-weight:normal;color:#202020;">No Customer Requests were Selected !</div>
<div class="t" style="left:644.00px;top:550px;font-size:13.8px;line-height:18px;font-weight:bold;color:#0808C4;">Selected 0 NRC:</div>
<div class="a" style="left:643px;top:569px;width:247px;height:34px;background:#fff;border-style:solid;border-width:1px;border-color:#808080 #fff #fff #808080;box-shadow:inset 1px 1px 0 #404040, inset -1px -1px 0 #D4D0C8;box-sizing:border-box"></div>
<div class="t" style="left:646.00px;top:570px;font-size:13.6px;line-height:18px;font-weight:normal;color:#202020;">No NRC were Selected !</div>
<div class="t" style="left:903.50px;top:550px;font-size:13.8px;line-height:18px;font-weight:bold;color:#0808C4;">Selected 0 NCTI:</div>
<div class="a" style="left:904px;top:569px;width:247px;height:34px;background:#fff;border-style:solid;border-width:1px;border-color:#808080 #fff #fff #808080;box-shadow:inset 1px 1px 0 #404040, inset -1px -1px 0 #D4D0C8;box-sizing:border-box"></div>
<div class="t" style="left:907.00px;top:570px;font-size:13.6px;line-height:18px;font-weight:normal;color:#202020;">No NCTI were Selected !</div>
<svg class="a" style="left:470px;top:400px" width="130" height="140"><path d="M19.6 40.3L44.4 23.8L95.5 115.7Z" fill="#1496F8"/><circle cx="26" cy="23" r="17" fill="#1496F8" stroke="#fff" stroke-width="1.6"/><circle cx="26" cy="23" r="18" fill="none" stroke="#303030" stroke-width="1.1"/><text x="26" y="29" text-anchor="middle" font-family="Liberation Sans" font-weight="bold" font-size="13" fill="#fff">11</text></svg>
</body></html>
